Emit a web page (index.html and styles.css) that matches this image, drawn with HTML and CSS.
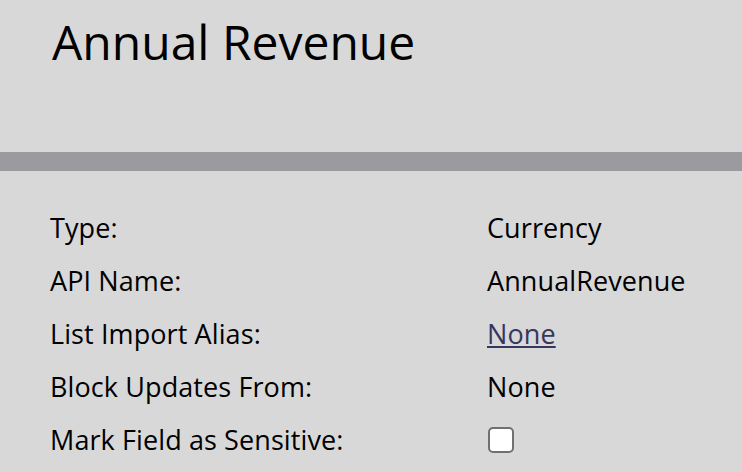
FILE: index.html
```html
<!DOCTYPE html>
<html lang="en">
<head>
    <meta charset="UTF-8">
    <meta name="viewport" content="width=device-width, initial-scale=1.0">
    <title>Annual Revenue</title>
    <link rel="stylesheet" href="styles.css">
</head>
<body>

<div class="header">
    <h1>Annual Revenue</h1>
</div>
<div class="divider"></div>

<div class="details">
    <div class="label">Type:</div>
    <div class="value">Currency</div>

    <div class="label">API Name:</div>
    <div class="value">AnnualRevenue</div>

    <div class="label">List Import Alias:</div>
    <div class="value"><a href="#">None</a></div>

    <div class="label">Block Updates From:</div>
    <div class="value">None</div>

    <div class="label">Mark Field as Sensitive:</div>
    <div class="value"><input type="checkbox" class="check"></div>
</div>

</body>
</html>
```

FILE: styles.css
```css
body {
    margin: 0;
    font-family: "Open Sans", sans-serif;
    background-color: #d8d8d8;
    color: #000;
}
.header {
    height: 152px;
    padding: 0 52px;
    box-sizing: border-box;
}
h1 {
    margin: 0;
    padding-top: 11px;
    font-size: 48px;
    font-weight: 400;
    line-height: 62px;
}
.divider {
    height: 19px;
    background: #9b9a9f;
}
.details {
    display: grid;
    grid-template-columns: 437px 1fr;
    grid-auto-rows: 53px;
    padding: 30px 0 0 50px;
    font-size: 27px;
    letter-spacing: 0.1px;
}
.label, .value {
    display: flex;
    align-items: center;
}
.value a {
    color: #36365f;
}
.check {
    appearance: none;
    width: 26px;
    height: 26px;
    margin: 0 0 0 1px;
    background: #fff;
    border: 2px solid #707070;
    border-radius: 5px;
}
```
